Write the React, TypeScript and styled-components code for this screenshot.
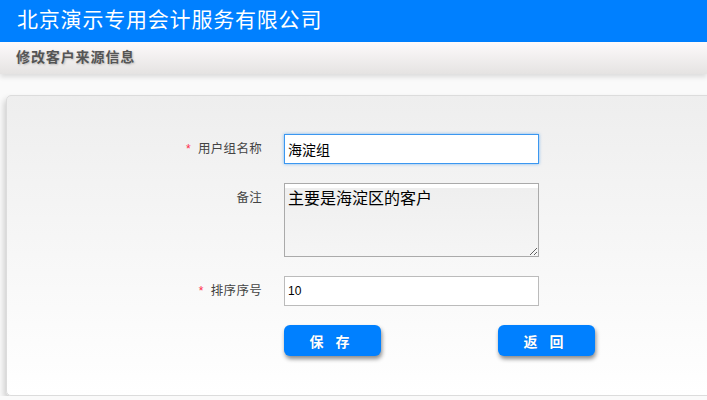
import { FC, type ReactElement } from "react"
import styled, { createGlobalStyle } from "styled-components"

const GlobalStyle = createGlobalStyle`
  html, body {
    margin: 0;
    padding: 0;
    background: #fafafa;
    font-family: "Liberation Sans", "Noto Sans CJK SC", sans-serif;
    overflow: hidden;
  }
`

const Header = styled.div`
  height: 42px;
  background: #0080ff;
  color: #fff;
  font-size: 21px;
  line-height: 40px;
  padding-left: 17px;
  letter-spacing: 0.8px;
`

const SubHeader = styled.div`
  height: 32px;
  line-height: 30px;
  padding-left: 16px;
  background: linear-gradient(#fdfafb, #e5e3e2);
  font-size: 14px;
  font-weight: bold;
  color: #555;
  letter-spacing: 0.9px;
  text-shadow: 1px 1px 2px #bbb;
  box-shadow: 0 3px 5px rgba(0, 0, 0, 0.12);
`

const Page = styled.div`
  padding: 21px 0 0 6px;
`

const Panel = styled.div`
  height: 301px;
  margin-right: -10px;
  border: 1px solid #dcdcdc;
  border-radius: 5px;
  background: linear-gradient(#eeeeee, #ffffff);
  box-shadow: -2px 4px 6px rgba(0, 0, 0, 0.18);
  padding-top: 38px;
  box-sizing: border-box;
`

const Form = styled.div`
  display: grid;
  grid-template-columns: 255px 255px;
  column-gap: 22px;
  row-gap: 19px;
`

const Label = styled.div<{ $required?: boolean }>`
  text-align: right;
  font-size: 12.5px;
  color: #444;
  line-height: 30px;
  letter-spacing: 0.3px;

  &::before {
    content: ${({ $required }) => ($required ? '"*"' : '""')};
    color: #ff2a4a;
    margin-right: 7px;
    font-size: 12px;
  }
`

const TextInput = styled.input<{ $focused?: boolean; $size?: number }>`
  width: 255px;
  height: 30px;
  box-sizing: border-box;
  padding: 0 3px;
  border: 1px solid ${({ $focused }) => ($focused ? "#3b97f0" : "#bbb")};
  box-shadow: ${({ $focused }) => ($focused ? "0 0 3px rgba(40, 140, 240, 0.6)" : "none")};
  background: #fff;
  font-size: ${({ $size }) => $size ?? 12}px;
  font-family: "Liberation Sans", "Noto Sans CJK SC", sans-serif;
  color: #000;
  outline: none;
`

const TextArea = styled.textarea`
  width: 255px;
  height: 74px;
  box-sizing: border-box;
  padding: 1px 3px;
  border: 1px solid #aaa;
  background: linear-gradient(#fff 0 4px, #efefef 4px 5px, #f5f5f5);
  font-size: 16px;
  font-family: "Liberation Sans", "Noto Sans CJK SC", sans-serif;
  color: #000;
  outline: none;
  resize: both;
  display: block;
`

const Buttons = styled.div`
  display: flex;
  gap: 117px;
  width: 400px;
`

const Button = styled.button`
  flex-shrink: 0;
  width: 97px;
  height: 31px;
  border: none;
  border-radius: 6px;
  background: #0080ff;
  color: #fff;
  font-size: 14px;
  font-weight: bold;
  font-family: "Liberation Sans", "Noto Sans CJK SC", sans-serif;
  letter-spacing: 12px;
  padding-left: 12px;
  box-shadow: 1px 3px 4px rgba(0, 0, 0, 0.45);
  text-shadow: 0 0 1px rgba(0, 0, 0, 0.2);
`

const App: FC = (): ReactElement => {
  return (
    <>
      <GlobalStyle />
      <Header>北京演示专用会计服务有限公司</Header>
      <SubHeader>修改客户来源信息</SubHeader>
      <Page>
        <Panel>
          <Form>
            <Label $required>用户组名称</Label>
            <TextInput $focused $size={14} defaultValue="海淀组" />
            <Label>备注</Label>
            <TextArea defaultValue="主要是海淀区的客户" />
            <Label $required>排序序号</Label>
            <TextInput defaultValue="10" />
            <div />
            <Buttons>
              <Button>保存</Button>
              <Button>返回</Button>
            </Buttons>
          </Form>
        </Panel>
      </Page>
    </>
  )
}

export default App
